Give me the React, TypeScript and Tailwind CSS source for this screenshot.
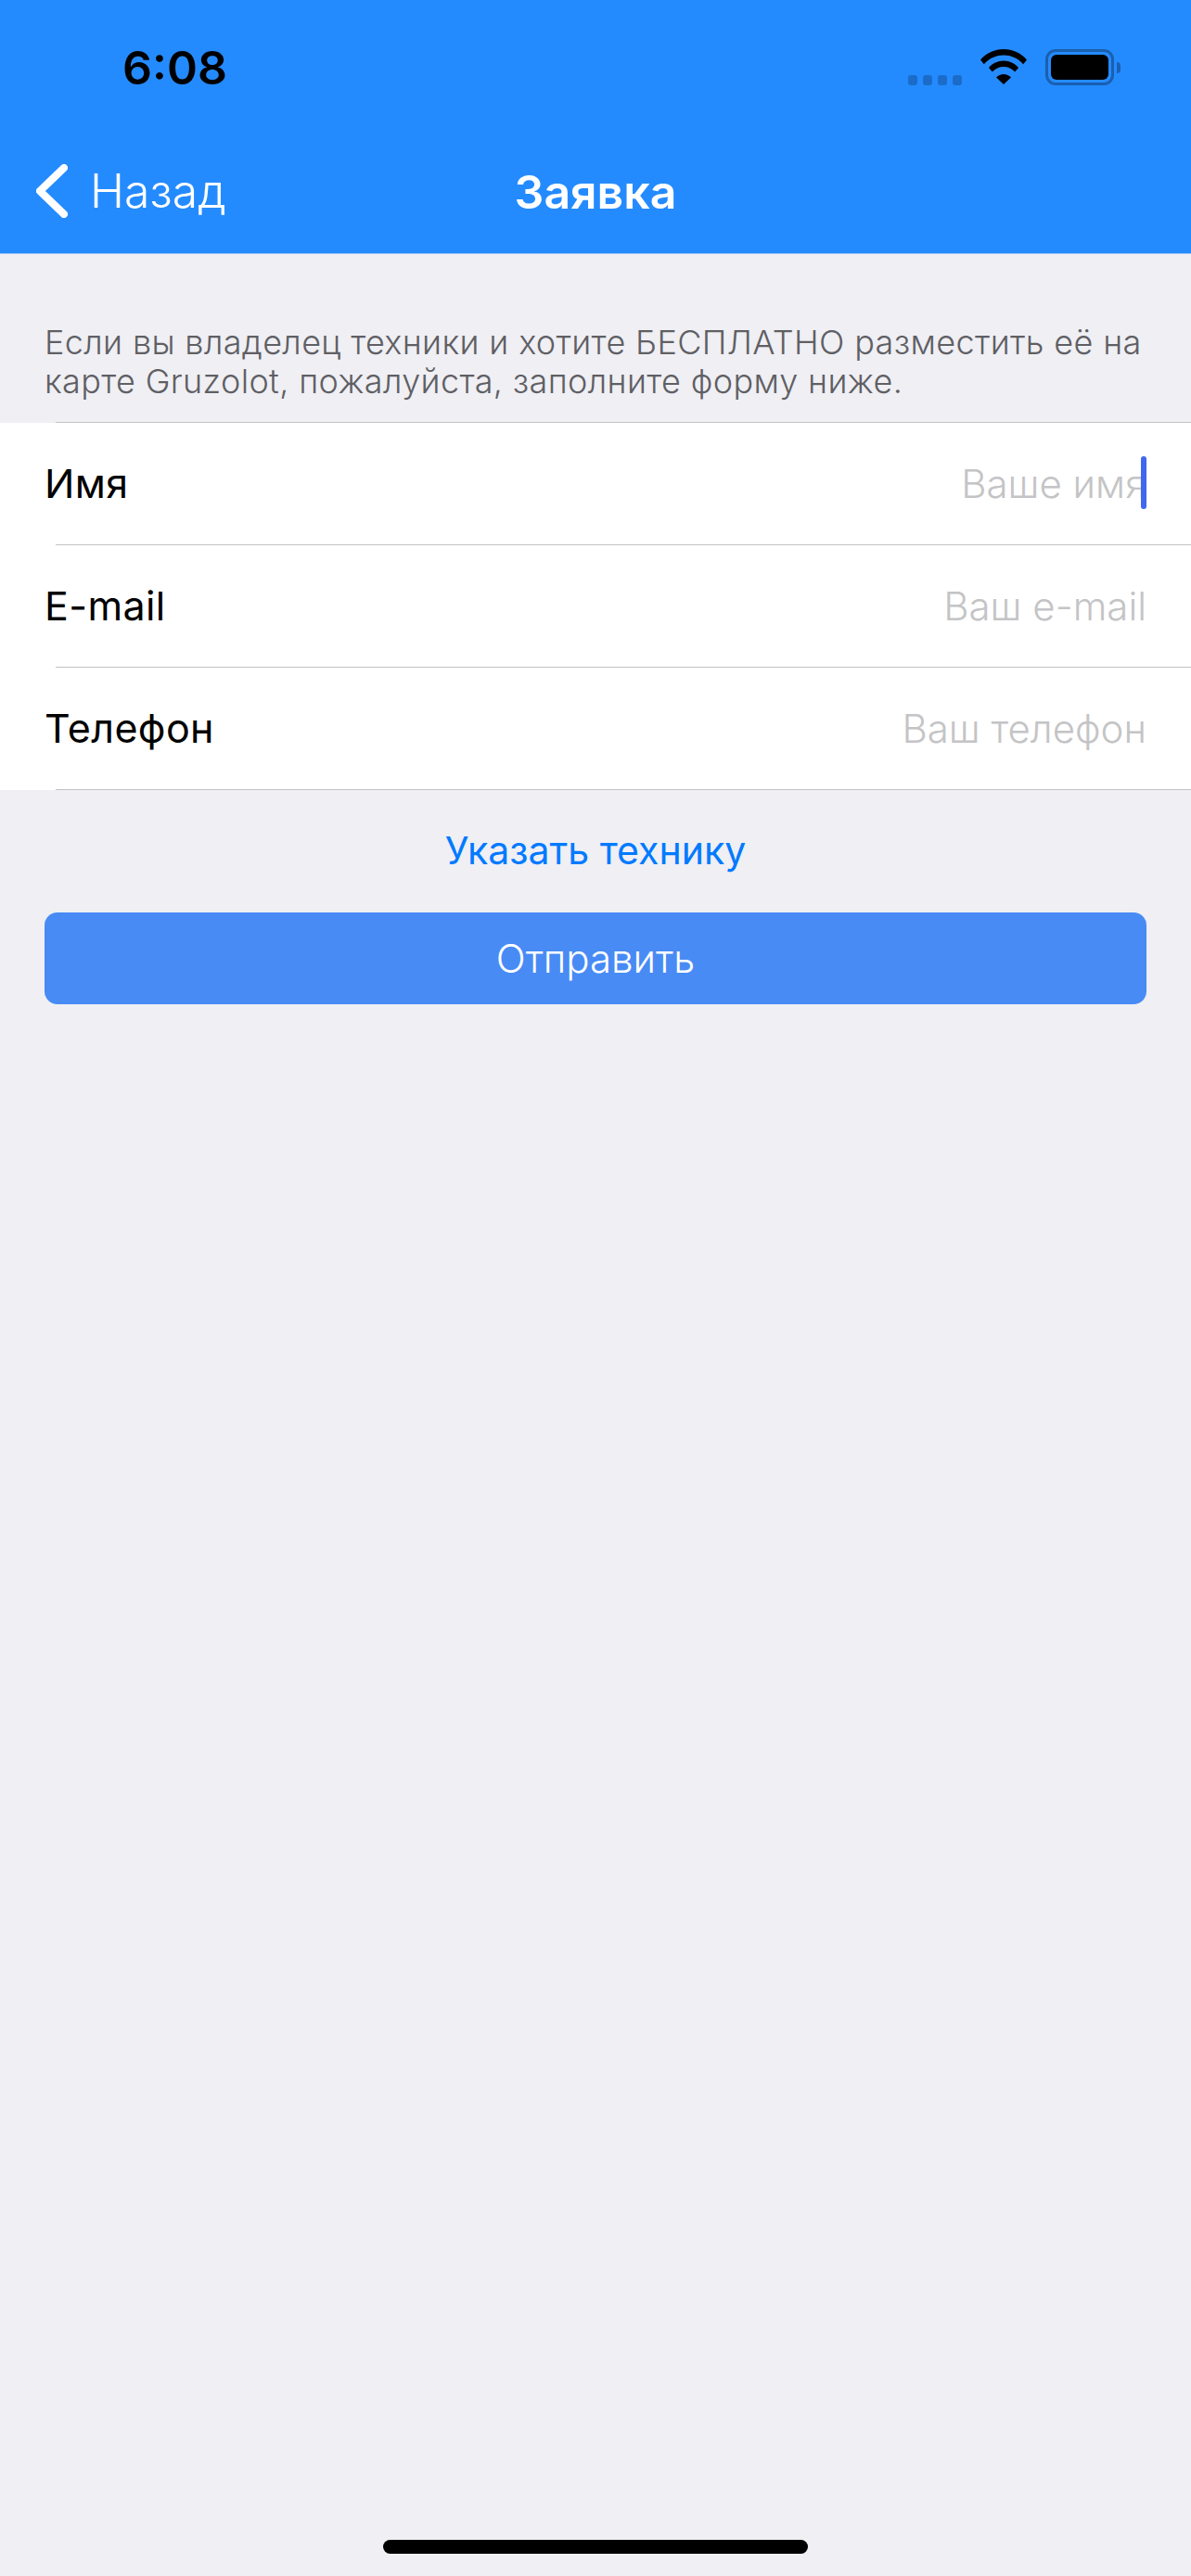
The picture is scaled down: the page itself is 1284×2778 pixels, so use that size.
const fields = [
  { label: 'Имя', placeholder: 'Ваше имя', focused: true },
  { label: 'E-mail', placeholder: 'Ваш e-mail', focused: false },
  { label: 'Телефон', placeholder: 'Ваш телефон', focused: false },
];

function StatusBar() {
  return (
    <div className="flex h-[172px] items-start justify-between pl-[132px] pr-[76px] pt-[43px]">
      <span className="text-[50px] leading-[60px] font-semibold text-black">6:08</span>
      <div className="flex items-start pt-[10px]">
        <div className="mt-[28px] mr-[20px] flex gap-[6px]">
          <div className="h-[11px] w-[10px] rounded-[3px] bg-[#1b6cc8]" />
          <div className="h-[11px] w-[10px] rounded-[3px] bg-[#1b6cc8]" />
          <div className="h-[11px] w-[10px] rounded-[3px] bg-[#1b6cc8]" />
          <div className="h-[11px] w-[10px] rounded-[3px] bg-[#1b6cc8]" />
        </div>
        <svg width="50" height="38" viewBox="0 0 50 38" className="mr-[20px]">
          <path d="M0 14.500C6.500 7 15.500 3 25 3s18.500 4 25 11.500l-3.800 4.700C40.500 12.800 33 9.500 25 9.500S9.500 12.800 3.800 19.200z" fill="#000" transform="translate(0 -3)" />
          <path d="M9 24C13 19.300 18.800 16.500 25 16.500S37 19.300 41 24l-3.800 4.600C34 25 29.700 23 25 23s-9 2-12.200 5.600z" fill="#000" transform="translate(0 -4)" />
          <path d="M17 30.500c2.200-2.200 5-3.500 8-3.500s5.800 1.300 8 3.500L25 38z" fill="#000" />
        </svg>
        <div className="flex items-center">
          <div className="h-[39px] w-[74px] rounded-[11px] border-[3px] border-[#1a5fb0] p-[3px]">
            <div className="h-full w-full rounded-[6px] bg-black" />
          </div>
          <div className="ml-[3px] h-[12px] w-[4px] rounded-r-full bg-[#1a5fb0]" />
        </div>
      </div>
    </div>
  );
}

function NavBar() {
  return (
    <div className="h-[274px] border-b border-[#9cc3f2] bg-[#248bff]">
      <StatusBar />
      <div className="relative flex h-[70px] items-center justify-center">
        <div className="absolute left-[39px] top-[5px] flex items-center gap-[24px]">
          <svg width="34" height="58" viewBox="0 0 34 58" fill="none">
            <path d="M30 4 L4 29 L30 54" stroke="#fff" strokeWidth="8" strokeLinecap="round" strokeLinejoin="round" />
          </svg>
          <span className="text-[50px] leading-[58px] font-light text-white">Назад</span>
        </div>
        <span className="text-[50px] leading-[58px] font-semibold text-white">Заявка</span>
      </div>
    </div>
  );
}

function Field({ label, placeholder, focused }: { label: string; placeholder: string; focused: boolean }) {
  return (
    <div>
      <div className="flex h-[131px] items-center justify-between pl-[48px] pr-[48px]">
        <span className="text-[43px] tracking-[0.4px] text-black">{label}</span>
        <div className="relative">
          <span className="text-[42px] font-light text-[#c4c4c6]">{placeholder}</span>
          {focused && (
            <div className="absolute right-0 top-[2px] h-[57px] w-[6px] rounded-full bg-[#3f68ee]" />
          )}
        </div>
      </div>
      <div className="ml-[60px] h-px bg-[#c2c2c6]" />
    </div>
  );
}

export default function App() {
  return (
    <div className="flex h-[2778px] w-[1284px] flex-col bg-[#efeff4] font-['Inter','Liberation_Sans',sans-serif]">
      <NavBar />
      <p className="px-[48px] pt-[74px] pb-[23px] text-[36px] leading-[42px] font-light tracking-[0.35px] text-[#5f5f64]">
        Если вы владелец техники и хотите БЕСПЛАТНО разместить её на карте Gruzolot, пожалуйста, заполните форму ниже.
      </p>
      <div className="ml-[60px] h-px bg-[#c2c2c6]" />
      <div className="bg-white">
        {fields.map((f) => (
          <Field key={f.label} {...f} />
        ))}
      </div>
      <div className="flex h-[132px] items-center justify-center">
        <span className="text-[41px] text-[#007aff]">Указать технику</span>
      </div>
      <div className="mx-[48px] flex h-[99px] items-center justify-center rounded-[14px] bg-[#488bf5]">
        <span className="text-[42px] font-light text-white">Отправить</span>
      </div>
      <div className="mt-auto mb-[24px] h-[15px] w-[458px] self-center rounded-full bg-black" />
    </div>
  );
}
